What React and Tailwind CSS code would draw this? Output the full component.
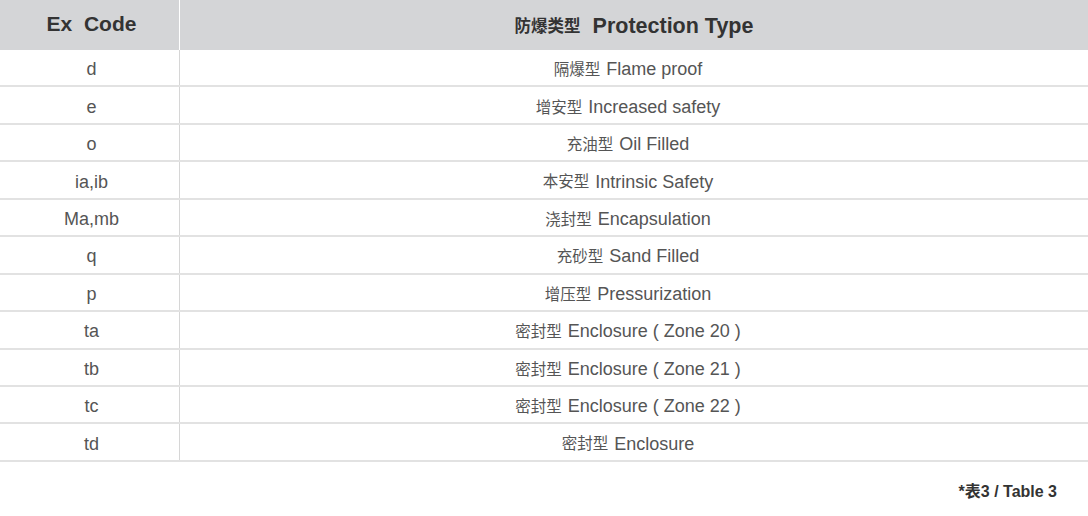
const rows = [
  ['d', '隔爆型 Flame proof'],
  ['e', '增安型 Increased safety'],
  ['o', '充油型 Oil Filled'],
  ['ia,ib', '本安型 Intrinsic Safety'],
  ['Ma,mb', '浇封型 Encapsulation'],
  ['q', '充砂型 Sand Filled'],
  ['p', '增压型 Pressurization'],
  ['ta', '密封型 Enclosure ( Zone 20 )'],
  ['tb', '密封型 Enclosure ( Zone 21 )'],
  ['tc', '密封型 Enclosure ( Zone 22 )'],
  ['td', '密封型 Enclosure'],
];

export default function App() {
  return (
    <div className="w-[1088px] h-[516px] bg-white text-[#555] font-['Liberation_Sans','Noto_Sans_CJK_SC',sans-serif]">
      <div className="grid grid-cols-[179px_1px_1fr] h-[50px] bg-[#d4d5d7] text-[#333] font-bold">
        <div className="flex items-center justify-center text-[21px] pl-1 pb-0.5">Ex&nbsp;&nbsp;Code</div>
        <div className="bg-white" />
        <div className="flex items-center justify-center text-[21.5px] pt-0.5">
          <span className="text-[16.5px] mr-3">防爆类型</span>Protection Type
        </div>
      </div>
      {rows.map(([code, type]) => (
        <div key={code} className="grid grid-cols-[179px_1px_1fr] h-[37.45px] border-b-2 border-[#e2e2e2] text-[18px]">
          <div className="flex items-center justify-center pt-1 pl-1">{code}</div>
          <div className="bg-[#d6d6d6]" />
          <div className="flex items-center justify-center pt-1 pr-3">
            <span className="text-[15.5px] mr-1.5">{type.slice(0, 3)}</span>
            {type.slice(4)}
          </div>
        </div>
      ))}
      <div className="flex justify-end pr-[31px] pt-[18px] text-[16px] font-bold text-[#333]">
        *表3 / Table 3
      </div>
    </div>
  );
}
